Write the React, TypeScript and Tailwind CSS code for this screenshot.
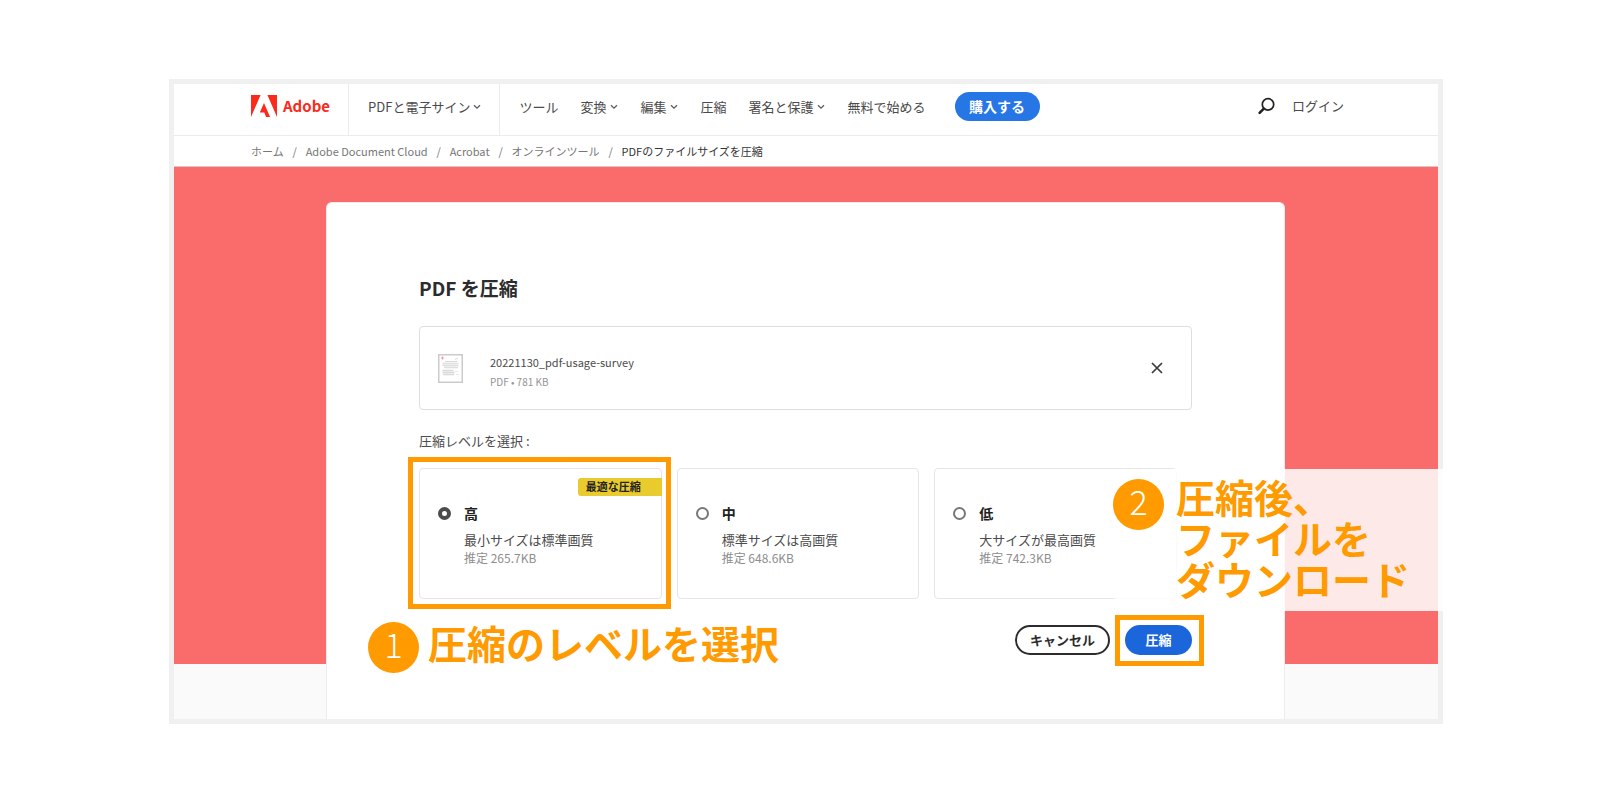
import { useState } from 'react'

interface NavItem {
  label: string
  menu?: boolean
}

interface Level {
  id: string
  name: string
  description: string
  estimate: string
  badge?: string
}

const navItems: NavItem[] = [
  { label: 'ツール' },
  { label: '変換', menu: true },
  { label: '編集', menu: true },
  { label: '圧縮' },
  { label: '署名と保護', menu: true },
  { label: '無料で始める' },
]

const crumbs = ['ホーム', 'Adobe Document Cloud', 'Acrobat', 'オンラインツール']

const levels: Level[] = [
  { id: 'high', name: '高', description: '最小サイズは標準画質', estimate: '推定 265.7KB', badge: '最適な圧縮' },
  { id: 'medium', name: '中', description: '標準サイズは高画質', estimate: '推定 648.6KB' },
  { id: 'low', name: '低', description: '大サイズが最高画質', estimate: '推定 742.3KB' },
]

function Chevron() {
  return (
    <svg viewBox="0 0 8 6" className="h-[6px] w-2 shrink-0" fill="none" stroke="#5c5c5c" strokeWidth="1.3">
      <path d="M1 1.2 4 4.2 7 1.2" />
    </svg>
  )
}

function AdobeMark() {
  return (
    <svg viewBox="0 0 26 22" className="h-[22px] w-[26px]" fill="#fa2a1c">
      <path d="M0 0h9.6L0 22zM16.4 0H26v22zM13 8.1 19.1 22h-4l-1.8-4.4H8.8z" />
    </svg>
  )
}

function SearchIcon() {
  return (
    <svg viewBox="0 0 18 18" className="h-[18px] w-[18px]" fill="none" stroke="#222" strokeLinecap="round">
      <circle cx="11" cy="7.4" r="5.7" strokeWidth="1.7" />
      <path d="M6.800 11.700 2.600 15.900" strokeWidth="2.6" />
    </svg>
  )
}

function FileThumb() {
  return (
    <svg viewBox="0 0 25 29" className="h-[29px] w-[25px] shrink-0" fill="none">
      <rect x="0.75" y="0.75" width="23.5" height="27.5" fill="#fff" stroke="#cbcbcb" strokeWidth="1.5" />
      <path d="M3 4h3M4.500 2.500v3" stroke="#f79a9a" strokeWidth="1.2" />
      <path d="M17 5.500l3-1.500M7 7.500h12" stroke="#d8d8d8" />
      <path d="M4.500 9.500h16M4.500 11.500h16M6 13.500h14" stroke="#dfdfdf" strokeWidth="1.4" />
      <path d="M4.500 16.500h11M4.500 18.500h12M5 20.500h11" stroke="#dadada" strokeWidth="1.4" />
      <path d="M17 17.500h3M18 20.500h3" stroke="#e9e9e9" />
    </svg>
  )
}

function StepNumber({ value }: { value: number }) {
  return (
    <span className="flex h-[51px] w-[51px] shrink-0 justify-center rounded-full bg-[#ff9a00] text-[34px] leading-[44px] font-light text-white">
      {value}
    </span>
  )
}

function Header() {
  return (
    <header className="flex h-[52px] border-b border-[#ececec] pl-[77px] text-[13px] text-[#4b4b4b]">
      <a href="#" className="flex items-center gap-[6px] border-r border-[#ececec] pr-[18px] pb-[7px] text-[15px] font-bold text-[#fa2a1c]">
        <AdobeMark />
        Adobe
      </a>
      <a href="#" className="flex items-center gap-[3px] border-r border-[#ececec] pr-[18px] pb-[6px] pl-[19px]">
        PDFと電子サイン
        <Chevron />
      </a>
      <nav className="flex items-center gap-[22px] pb-[6px] pl-[19px]">
        {navItems.map((item) => (
          <a key={item.label} href="#" className="flex items-center gap-1 whitespace-nowrap">
            {item.label}
            {item.menu && <Chevron />}
          </a>
        ))}
      </nav>
      <button type="button" className="mt-2 ml-[29px] h-[29px] w-[85px] rounded-full bg-[#2676e6] pb-px text-[14px] leading-5 font-bold text-white">
        購入する
      </button>
      <div className="mr-[94px] ml-auto flex items-center gap-[17px] pb-[8px]">
        <button type="button" aria-label="検索">
          <SearchIcon />
        </button>
        <a href="#">ログイン</a>
      </div>
    </header>
  )
}

function Breadcrumbs() {
  return (
    <nav aria-label="breadcrumb" className="flex h-[31px] items-center border-b border-[#e2c4c4] pl-[77px] text-[11px] text-[#777]">
      {crumbs.map((crumb) => (
        <span key={crumb} className="flex">
          <a href="#">{crumb}</a>
          <span className="w-[22px] text-center">/</span>
        </span>
      ))}
      <span className="text-[#333]">PDFのファイルサイズを圧縮</span>
    </nav>
  )
}

function LevelCard({ level, checked, onSelect }: { level: Level; checked: boolean; onSelect: () => void }) {
  return (
    <label className="relative flex h-[131px] gap-[13px] rounded-[4px] border border-[#e6e6e6] pt-[34px] pl-[18px]">
      <input
        type="radio"
        name="level"
        checked={checked}
        onChange={onSelect}
        className="mt-1 h-[13px] w-[13px] shrink-0 appearance-none rounded-full border-2 border-[#777] bg-white checked:border-4 checked:border-[#4b4b4b]"
      />
      <span className="flex flex-col">
        <span className="text-[14px] leading-[21px] font-bold text-[#222]">{level.name}</span>
        <span className="mt-[7px] text-[13px] leading-[18px] text-[#4b4b4b]">{level.description}</span>
        <span className="text-[12px] leading-[18px] text-[#8e8e8e]">{level.estimate}</span>
      </span>
      {level.badge && (
        <span className="absolute top-[9px] -right-px h-[18px] w-[84px] rounded-l-[3px] bg-[#eacb2e] pl-2 text-[11px] leading-[17px] font-bold text-[#222]">
          {level.badge}
        </span>
      )}
      {level.id === 'high' && (
        <span className="pointer-events-none absolute -top-3 -right-[10px] -bottom-[11px] -left-3 border-5 border-[#ff9a00]" />
      )}
    </label>
  )
}

export default function App() {
  const [selected, setSelected] = useState('high')

  return (
    <div className="min-h-screen bg-white py-[79px] font-['Noto_Sans_CJK_JP',sans-serif]">
      <div className="relative mx-auto max-w-[1274px] border-5 border-[#f0f0f0]">
        <Header />
        <Breadcrumbs />

        <main className="bg-[linear-gradient(to_bottom,#fa6b6b_497px,#fafafa_497px)] pt-[35px]">
          <div className="mr-[153px] ml-[152px] rounded-t-[6px] border border-b-0 border-[#ececec] bg-white px-[92px] pt-[71px] pb-[64px]">
            <h1 className="text-[19px] leading-7 font-bold text-[#2c2c2c]">PDF を圧縮</h1>

            <div className="mt-6 flex h-[84px] items-center rounded-[4px] border border-[#dedede] pr-[27px] pl-[18px]">
              <FileThumb />
              <div className="mt-2 ml-[27px]">
                <p className="text-[11px] leading-5 text-[#4b4b4b]">20221130_pdf-usage-survey</p>
                <p className="text-[10px] leading-5 text-[#959595]">PDF • 781 KB</p>
              </div>
              <button type="button" aria-label="削除" className="ml-auto">
                <svg viewBox="0 0 14 14" className="h-[14px] w-[14px]" fill="none" stroke="#3a3a3a" strokeWidth="1.7">
                  <path d="M2 2l10 10M12 2 2 12" />
                </svg>
              </button>
            </div>

            <p className="mt-[21px] text-[13px] leading-5 text-[#4b4b4b]">圧縮レベルを選択 :</p>
            <div className="mt-[17px] mr-[15px] grid grid-cols-3 gap-[15px]">
              {levels.map((level) => (
                <LevelCard
                  key={level.id}
                  level={level}
                  checked={selected === level.id}
                  onSelect={() => setSelected(level.id)}
                />
              ))}
            </div>

            <div className="mt-[26px] flex justify-end gap-[15px] text-[13px] font-bold">
              <button type="button" className="h-[30px] w-[95px] rounded-full border-2 border-[#2c2c2c] text-[#2c2c2c]">
                キャンセル
              </button>
              <div className="relative">
                <button type="button" className="h-[30px] w-[67px] rounded-full bg-[#1b66db] text-white">
                  圧縮
                </button>
                <span className="pointer-events-none absolute -top-[10px] -right-3 -bottom-[11px] -left-[10px] border-5 border-[#ff9a00]" />
              </div>
            </div>
          </div>
        </main>

        {/* step callouts laid over the page */}
        <div className="absolute top-[538px] left-[194px] flex gap-[9px] text-[39px] font-bold text-[#ff9a00]">
          <StepNumber value={1} />
          <span className="leading-[40px] whitespace-nowrap">圧縮のレベルを選択</span>
        </div>
        <div className="absolute top-[385px] right-[264px] h-[142px] w-[59px] bg-white/85" />
        <div className="absolute top-[385px] -right-[5px] h-[142px] w-[269px] bg-white/85" />
        <div className="absolute top-[395px] left-[939px] flex gap-3 text-[39px] font-bold text-[#ff9a00]">
          <StepNumber value={2} />
          <span className="-mt-[3px] leading-[41px] whitespace-nowrap">
            圧縮後、
            <br />
            ファイルを
            <br />
            ダウンロード
          </span>
        </div>
      </div>
    </div>
  )
}
